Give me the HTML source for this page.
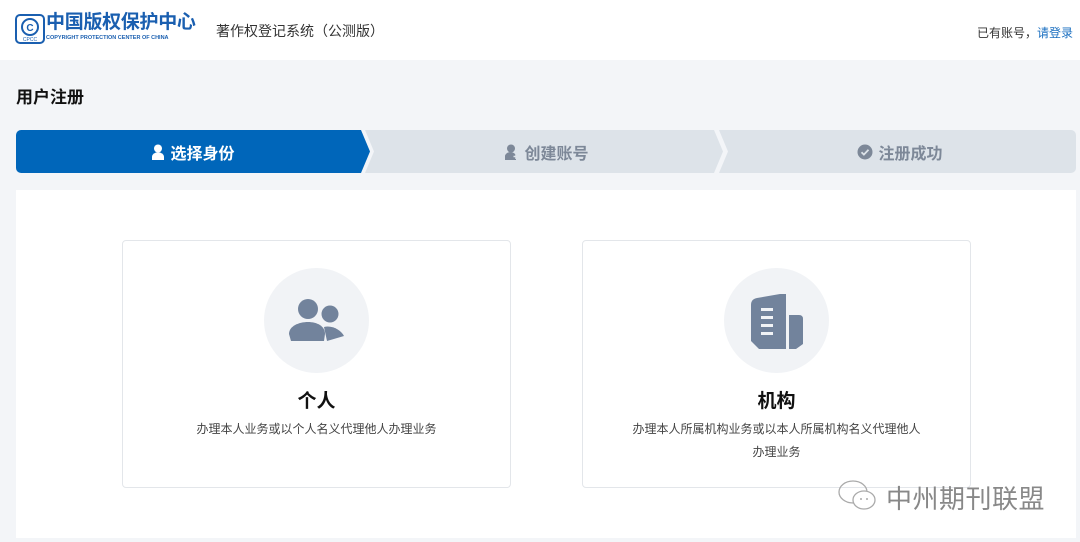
<!DOCTYPE html>
<html><head><meta charset="utf-8">
<style>
*{margin:0;padding:0;box-sizing:border-box}
body{width:1080px;height:542px;background:#f3f5f8;font-family:"Liberation Sans","Noto Sans CJK SC",sans-serif;position:relative;overflow:hidden}
.hdr{position:absolute;left:0;top:0;width:1080px;height:60px;background:#fff}
.abs{position:absolute}
.steps{position:absolute;left:16px;top:130px;width:1060px;height:43px}
.st{position:absolute;top:0;height:43px;display:flex;align-items:center;justify-content:center;font-size:16px;font-weight:bold;color:#7d8898}
.panel{position:absolute;left:16px;top:190px;width:1060px;height:348px;background:#fff}
.card{position:absolute;top:240px;width:389px;height:248px;border:1px solid #e3e6ea;border-radius:4px;background:#fff;text-align:center}
.circ{position:absolute;left:141px;top:27px;width:105px;height:105px;border-radius:50%;background:#f1f3f6}
.ct{position:absolute;left:0;width:100%;top:145px;font-size:19px;font-weight:bold;color:#111}
.cd{position:absolute;left:0;width:100%;top:177px;font-size:12px;color:#444;line-height:23px}
</style></head><body>
<div class="hdr"></div>
<svg class="abs" style="left:15px;top:14px" width="30" height="30" viewBox="0 0 30 30"><rect x="1" y="1" width="28" height="28" rx="4" fill="none" stroke="#1a5fb0" stroke-width="2"/><circle cx="15" cy="13" r="8" fill="none" stroke="#1a5fb0" stroke-width="2"/><text x="15" y="17" font-size="10" font-weight="bold" fill="#1a5fb0" text-anchor="middle" font-family="Liberation Sans">C</text><text x="15" y="27" font-size="5" fill="#1a5fb0" text-anchor="middle" font-family="Liberation Sans">CPCC</text></svg>
<div class="abs" style="left:46px;top:12px;font-size:19px;font-weight:bold;color:#1a5fb0;letter-spacing:-0.3px;line-height:22px">中国版权保护中心</div>
<div class="abs" style="left:46px;top:35px;font-size:5.5px;font-weight:bold;color:#1a5fb0;white-space:nowrap">COPYRIGHT PROTECTION CENTER OF CHINA</div>
<div class="abs" style="left:216px;top:21px;font-size:14px;color:#333">著作权登记系统（公测版）</div>
<div class="abs" style="left:977px;top:24px;font-size:12px;color:#333">已有账号，<span style="color:#1a6fc0">请登录</span></div>
<div class="abs" style="left:16px;top:83px;font-size:17px;font-weight:bold;color:#111">用户注册</div>
<div class="steps">
<svg class="abs" style="left:0;top:0" width="1060" height="43"><path d="M5 0H345L354 21.5L345 43H5A5 5 0 0 1 0 38V5A5 5 0 0 1 5 0Z" fill="#0066ba"/><path d="M349 0H698L707 21.5L698 43H349L358 21.5Z" fill="#dde3e9"/><path d="M703 0H1055A5 5 0 0 1 1060 5V38A5 5 0 0 1 1055 43H703L712 21.5Z" fill="#dde3e9"/></svg>
<div class="st" style="left:0;width:354px;color:#fff"><svg width="14" height="16" viewBox="0 0 14 16" style="margin-right:5px"><circle cx="7" cy="4.5" r="4" fill="#fff"/><path d="M1 16V13A5 4 0 0 1 13 13V16Z" fill="#fff"/></svg>选择身份</div>
<div class="st" style="left:354px;width:354px"><svg width="14" height="16" viewBox="0 0 14 16" style="margin-right:5px"><circle cx="6" cy="4.5" r="4" fill="#7d8898"/><path d="M0 16V13A5 4 0 0 1 11 12V16Z" fill="#7d8898"/><path d="M11 10v5M8.5 12.5h5" stroke="#dde3e9" stroke-width="1.5"/></svg>创建账号</div>
<div class="st" style="left:708px;width:352px"><svg width="16" height="16" viewBox="0 0 16 16" style="margin-right:5px"><circle cx="8" cy="8" r="7.5" fill="#7d8898"/><path d="M4.5 8.2l2.4 2.4 4.6-4.8" fill="none" stroke="#dde3e9" stroke-width="1.8"/></svg>注册成功</div>
</div>
<div class="panel"></div>
<div class="card" style="left:122px">
<div class="circ"><svg width="105" height="105" viewBox="0 0 105 105"><circle cx="44" cy="41" r="10" fill="#72839c"/><circle cx="66" cy="46" r="8.5" fill="#72839c"/><path d="M27 73L25 66C25 58 35 54 44 54C53 54 61 58 61 66L60 73Z" fill="#72839c"/><path d="M63 73L60 59C68 57 77 62 80 68Z" fill="#72839c"/></svg></div>
<div class="ct">个人</div>
<div class="cd">办理本人业务或以个人名义代理他人办理业务</div>
</div>
<div class="card" style="left:582px">
<div class="circ"><svg width="105" height="105" viewBox="0 0 105 105"><path d="M27 37Q27 31 33 30L56 26H62V81H35L27 73Z" fill="#72839c"/><path d="M65 47H75Q79 47 79 51V76L72 81H65Z" fill="#72839c"/><rect x="37" y="40" width="12" height="3" fill="#f1f3f6"/><rect x="37" y="48" width="12" height="3" fill="#f1f3f6"/><rect x="37" y="56" width="12" height="3" fill="#f1f3f6"/><rect x="37" y="64" width="12" height="3" fill="#f1f3f6"/></svg></div>
<div class="ct">机构</div>
<div class="cd">办理本人所属机构业务或以本人所属机构名义代理他人<br>办理业务</div>
</div>
<svg class="abs" style="left:836px;top:478px" width="46" height="36" viewBox="0 0 46 36"><ellipse cx="17" cy="14" rx="14" ry="11" fill="none" stroke="#aaa" stroke-width="1.3"/><ellipse cx="28" cy="22" rx="11" ry="9" fill="#fff" stroke="#aaa" stroke-width="1.3"/><circle cx="25" cy="21" r="1" fill="#aaa"/><circle cx="31" cy="21" r="1" fill="#aaa"/></svg>
<div class="abs" style="left:886px;top:479px;font-size:26px;color:#888;letter-spacing:0.5px">中州期刊联盟</div>
</body></html>
